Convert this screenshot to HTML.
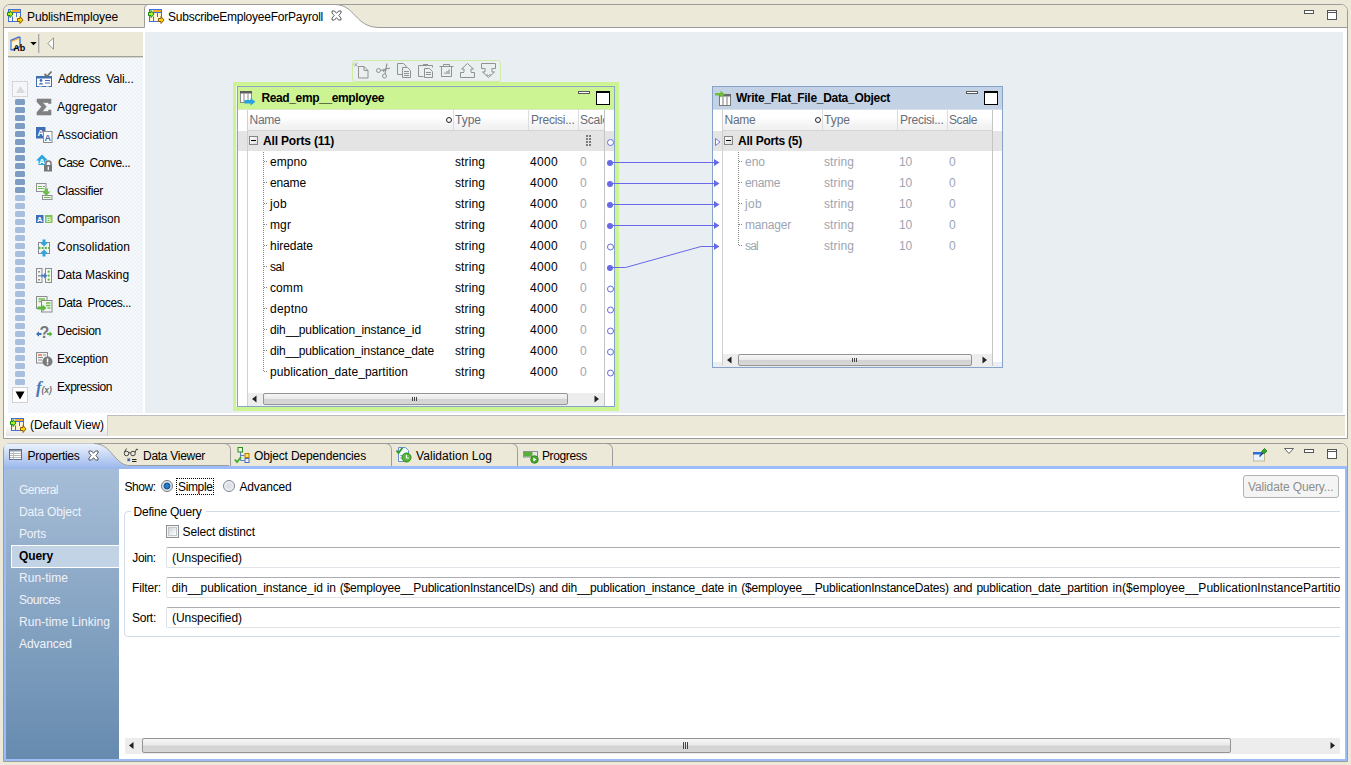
<!DOCTYPE html>
<html><head><meta charset="utf-8"><title>Developer</title>
<style>
html,body{margin:0;padding:0}
body{width:1351px;height:765px;overflow:hidden;background:#ECE9D8;position:relative;font-family:"Liberation Sans", sans-serif;font-size:12px;color:#000}
.r{position:absolute;box-sizing:border-box}
.t{position:absolute;white-space:pre;line-height:16px;height:16px}
svg{position:absolute;overflow:visible}
</style></head><body>
<div class="r" style="left:3px;top:4px;width:1345px;height:435px;border:1px solid #9C9C9C;border-radius:7px 7px 0 0;background:#fff"></div>
<div class="r" style="left:4px;top:5px;width:1343px;height:23px;background:#ECE9D8;border-bottom:1px solid #9C9C9C;border-radius:6px 6px 0 0"></div>
<svg style="left:0;top:0" width="1351" height="40" viewBox="0 0 1351 40">
<path d="M144.500 28.500 V9 Q144.500 4.500 149 4.500 H334.500 C346.500 4.500 351.500 12 357.500 18 C363.500 24 369.500 27.500 380 27.500 V28.500 Z" fill="#fff"/>
<path d="M144.500 27.500 V9 Q144.500 4.500 149 4.500 H334.500 C346.500 4.500 351.500 12 357.500 18 C363.500 24 369.500 27.500 380 27.500" fill="none" stroke="#9C9C9C"/>
</svg>
<svg style="left:7px;top:9px" width="17" height="16" viewBox="0 0 17 16">
<rect x="1.5" y=".5" width="12" height="12" fill="#FFF3D6" stroke="#3F70D6"/>
<rect x="5" y="1" width="8" height="2" fill="#F7A824"/>
<path d="M5 3.500h9M9.500 4v4M5.500 7.500v5" stroke="#3F70D6" fill="none"/>
<path d="M.500 3.500h2.500V1.500l3 3.500-3 3.500V6.500H.500z" fill="#B4EC20" stroke="#0E8A10" stroke-width="1"/>
<path d="M10.500 9.500h2.500V7.500l3 3.500-3 3.500V12.500h-2.500z" fill="#FFD400" stroke="#8C5C00" stroke-width="1"/>
</svg>
<span class="t" style="left:27px;top:8.5px;letter-spacing:-0.115px;">PublishEmployee</span>
<svg style="left:148px;top:9px" width="17" height="16" viewBox="0 0 17 16">
<rect x="1.5" y=".5" width="12" height="12" fill="#FFF3D6" stroke="#3F70D6"/>
<rect x="5" y="1" width="8" height="2" fill="#F7A824"/>
<path d="M5 3.500h9M9.500 4v4M5.500 7.500v5" stroke="#3F70D6" fill="none"/>
<path d="M.500 3.500h2.500V1.500l3 3.500-3 3.500V6.500H.500z" fill="#B4EC20" stroke="#0E8A10" stroke-width="1"/>
<path d="M10.500 9.500h2.500V7.500l3 3.500-3 3.500V12.500h-2.500z" fill="#FFD400" stroke="#8C5C00" stroke-width="1"/>
</svg>
<span class="t" style="left:168px;top:8.5px;letter-spacing:-0.237px;">SubscribeEmployeeForPayroll</span>
<svg style="left:331px;top:10px" width="11" height="11" viewBox="0 0 11 11"><path d="M1 1h2.500l2 2.300 2-2.300H10v2L7.800 5.500 10 8v2H7.500l-2-2.300-2 2.300H1V8l2.200-2.500L1 3z" fill="#fff" stroke="#4A4A4A" stroke-width=".9"/></svg>
<div class="r" style="left:1304px;top:10px;width:10px;height:4px;border:1px solid #555;background:#fff"></div>
<div class="r" style="left:1327px;top:10px;width:10px;height:10px;border:1px solid #555;background:linear-gradient(#fff 0 1px,#555 1px 2px,#fff 2px)"></div>
<div class="r" style="left:8px;top:32px;width:135px;height:25px;background:#ECE9D8;border-bottom:1px solid #A2A19A"></div>
<div class="r" style="left:8px;top:57px;width:135px;height:356px;background:repeating-conic-gradient(#EEF3F8 0 25%,#F6F8FB 0 50%) 0 0/4px 4px"></div>
<div class="r" style="left:8px;top:57px;width:135px;height:1px;background:#D4D6D2"></div>
<div class="r" style="left:38px;top:34px;width:1px;height:19px;background:#A8A8A8"></div>
<div class="r" style="left:39px;top:34px;width:1px;height:19px;background:#D4D2C6"></div>
<svg style="left:47px;top:37px" width="8" height="13" viewBox="0 0 8 13"><path d="M6.500.800v11.400L.800 6.500z" fill="#fff" stroke="#8A8A8A" stroke-width=".9"/></svg>
<svg style="left:30px;top:42px" width="8" height="5" viewBox="0 0 8 5"><path d="M.300 0h6.400L3.500 3.300z" fill="#000"/></svg>
<svg style="left:10px;top:36px" width="18" height="18" viewBox="0 0 18 18"><path d="M.800 4.500l8-3.500 1.200.5v9l-8 3.500-1.200-.5z" fill="#FFF4D8" stroke="#3F72DC" stroke-width="1.400"/>
<path d="M1.500 5.500l7.500-3.200" stroke="#F2A32C" stroke-width="1.500" stroke-dasharray="1.500 .6"/>
<path d="M.800 4.500v9" stroke="#7FA2E8" stroke-width="1.600"/></svg>
<span class="t" style="left:13.3px;top:39.6px;letter-spacing:0.000px;font-weight:bold;font-size:9px;">Ab</span>
<div class="r" style="left:12px;top:81px;width:16px;height:16px;border:1px solid #D6D6D6;background:#F4F6F9"></div>
<svg style="left:15.5px;top:86px" width="9" height="7" viewBox="0 0 9 7"><path d="M4.500 0L9 7H0z" fill="#DADADA"/></svg>
<div class="r" style="left:15px;top:99px;width:10px;height:6px;background:#7E9DC2;border-radius:1.500px"></div>
<div class="r" style="left:15px;top:107px;width:10px;height:6px;background:#7E9DC2;border-radius:1.500px"></div>
<div class="r" style="left:15px;top:115px;width:10px;height:6px;background:#7E9DC2;border-radius:1.500px"></div>
<div class="r" style="left:15px;top:123px;width:10px;height:6px;background:#7E9DC2;border-radius:1.500px"></div>
<div class="r" style="left:15px;top:131px;width:10px;height:6px;background:#7E9DC2;border-radius:1.500px"></div>
<div class="r" style="left:15px;top:139px;width:10px;height:6px;background:#7E9DC2;border-radius:1.500px"></div>
<div class="r" style="left:15px;top:147px;width:10px;height:6px;background:#7E9DC2;border-radius:1.500px"></div>
<div class="r" style="left:15px;top:155px;width:10px;height:6px;background:#7E9DC2;border-radius:1.500px"></div>
<div class="r" style="left:15px;top:163px;width:10px;height:6px;background:#7E9DC2;border-radius:1.500px"></div>
<div class="r" style="left:15px;top:171px;width:10px;height:6px;background:#7E9DC2;border-radius:1.500px"></div>
<div class="r" style="left:15px;top:179px;width:10px;height:6px;background:#7E9DC2;border-radius:1.500px"></div>
<div class="r" style="left:15px;top:187px;width:10px;height:6px;background:#7E9DC2;border-radius:1.500px"></div>
<div class="r" style="left:15px;top:195px;width:10px;height:6px;background:#A8BFE0;border-radius:1.500px"></div>
<div class="r" style="left:15px;top:203px;width:10px;height:6px;background:#A8BFE0;border-radius:1.500px"></div>
<div class="r" style="left:15px;top:211px;width:10px;height:6px;background:#A8BFE0;border-radius:1.500px"></div>
<div class="r" style="left:15px;top:219px;width:10px;height:6px;background:#A8BFE0;border-radius:1.500px"></div>
<div class="r" style="left:15px;top:227px;width:10px;height:6px;background:#A8BFE0;border-radius:1.500px"></div>
<div class="r" style="left:15px;top:235px;width:10px;height:6px;background:#A8BFE0;border-radius:1.500px"></div>
<div class="r" style="left:15px;top:243px;width:10px;height:6px;background:#A8BFE0;border-radius:1.500px"></div>
<div class="r" style="left:15px;top:251px;width:10px;height:6px;background:#A8BFE0;border-radius:1.500px"></div>
<div class="r" style="left:15px;top:259px;width:10px;height:6px;background:#A8BFE0;border-radius:1.500px"></div>
<div class="r" style="left:15px;top:267px;width:10px;height:6px;background:#A8BFE0;border-radius:1.500px"></div>
<div class="r" style="left:15px;top:275px;width:10px;height:6px;background:#A8BFE0;border-radius:1.500px"></div>
<div class="r" style="left:15px;top:283px;width:10px;height:6px;background:#A8BFE0;border-radius:1.500px"></div>
<div class="r" style="left:15px;top:291px;width:10px;height:6px;background:#A8BFE0;border-radius:1.500px"></div>
<div class="r" style="left:15px;top:299px;width:10px;height:6px;background:#A8BFE0;border-radius:1.500px"></div>
<div class="r" style="left:15px;top:307px;width:10px;height:6px;background:#A8BFE0;border-radius:1.500px"></div>
<div class="r" style="left:15px;top:315px;width:10px;height:6px;background:#A8BFE0;border-radius:1.500px"></div>
<div class="r" style="left:15px;top:323px;width:10px;height:6px;background:#A8BFE0;border-radius:1.500px"></div>
<div class="r" style="left:15px;top:331px;width:10px;height:6px;background:#A8BFE0;border-radius:1.500px"></div>
<div class="r" style="left:15px;top:339px;width:10px;height:6px;background:#A8BFE0;border-radius:1.500px"></div>
<div class="r" style="left:15px;top:347px;width:10px;height:6px;background:#A8BFE0;border-radius:1.500px"></div>
<div class="r" style="left:15px;top:355px;width:10px;height:6px;background:#A8BFE0;border-radius:1.500px"></div>
<div class="r" style="left:15px;top:363px;width:10px;height:6px;background:#A8BFE0;border-radius:1.500px"></div>
<div class="r" style="left:15px;top:371px;width:10px;height:6px;background:#A8BFE0;border-radius:1.500px"></div>
<div class="r" style="left:15px;top:379px;width:10px;height:6px;background:#A8BFE0;border-radius:1.500px"></div>
<div class="r" style="left:12px;top:387px;width:16px;height:16px;border:1px solid #D0D0D0;background:#fff"></div>
<svg style="left:15px;top:391px" width="10" height="9" viewBox="0 0 10 9"><path d="M.500.500h9L5 8.500z" fill="#000"/></svg>
<span class="t" style="left:58px;top:71px;letter-spacing:-0.270px;">Address  Vali...</span>
<svg style="left:36px;top:71px" width="17" height="18" viewBox="0 0 17 18"><rect x=".5" y="5.500" width="15" height="10" fill="#fff" stroke="#3F6EB4"/>
<rect x="1" y="6" width="14" height="1.500" fill="#3F6EB4"/>
<circle cx="5" cy="9.500" r="1.400" fill="#3F6EB4"/><path d="M2.500 13.500q2.500-3.500 5 0z" fill="#3F6EB4"/>
<path d="M9 9.500h5M9 12h5" stroke="#3F6EB4"/>
<path d="M3 15.500l1.500-2 1.500 2M10 15.500l1.500-2 1.500 2" fill="#fff" stroke="none"/>
<path d="M8.500 3l2.500 2.500L15.500.500" stroke="#707070" stroke-width="1.800" fill="none"/></svg>
<span class="t" style="left:57px;top:99px;letter-spacing:0.062px;">Aggregator</span>
<svg style="left:36px;top:99px" width="17" height="18" viewBox="0 0 17 18"><path d="M1 0h14v4.500h-2.500V3.500H6.500l3.800 4.300-4 4.700h6.200V11h2.500v5H1v-2.800l4.600-5.400L1 3z" fill="#808080" stroke="#808080" stroke-width=".6"/></svg>
<span class="t" style="left:57px;top:127px;letter-spacing:-0.034px;">Association</span>
<svg style="left:36px;top:127px" width="17" height="18" viewBox="0 0 17 18"><rect x="0" y="0" width="9.500" height="11.500" fill="#3F6EB4"/>
<text x="4.700" y="8.500" font-size="9" font-weight="bold" fill="#fff" text-anchor="middle" font-family="Liberation Sans">A</text>
<rect x="7.500" y="4.500" width="8.500" height="11" fill="#fff" stroke="#8A8A8A"/>
<text x="11.800" y="14" font-size="9" font-weight="bold" fill="#3F6EB4" text-anchor="middle" font-family="Liberation Sans">A</text></svg>
<span class="t" style="left:58px;top:155px;letter-spacing:-0.527px;">Case  Conve...</span>
<svg style="left:36px;top:155px" width="17" height="18" viewBox="0 0 17 18"><path d="M6 -.500L12 5.500H9.500V10H2.500V5.500H0z" fill="#2FA5E0"/>
<text x="6" y="8.500" font-size="8" font-weight="bold" fill="#fff" text-anchor="middle" font-family="Liberation Sans">A</text>
<path d="M10 10V8.500a2.500 2.500 0 0 1 5 0V10" fill="none" stroke="#777" stroke-width="1.500"/>
<rect x="8" y="10" width="8" height="6.500" fill="#777"/><rect x="11.700" y="11.500" width="1.200" height="3.500" fill="#fff"/></svg>
<span class="t" style="left:57px;top:183px;letter-spacing:-0.334px;">Classifier</span>
<svg style="left:36px;top:183px" width="17" height="18" viewBox="0 0 17 18"><rect x=".5" y=".500" width="9.500" height="8" fill="#F4F4F4" stroke="#909090"/>
<path d="M2 3.500h4M2 5.500h6" stroke="#6CC04A" stroke-width="1"/><path d="M7 3.500h2" stroke="#909090"/>
<path d="M8.500 5.500h3.500v3h2.500L10.300 13 6 8.500h2.500z" fill="#6CC04A"/>
<rect x="6.500" y="12.500" width="9.500" height="4" fill="#F4F4F4" stroke="#909090"/><path d="M8 14.500h6.500" stroke="#6CC04A"/></svg>
<span class="t" style="left:57px;top:211px;letter-spacing:-0.170px;">Comparison</span>
<svg style="left:36px;top:211px" width="17" height="18" viewBox="0 0 17 18"><rect x="0" y="4" width="7.500" height="8" fill="#3F6EB4"/><rect x="9" y="4" width="7.500" height="8" fill="#7DC35A"/>
<text x="3.800" y="11" font-size="7.500" font-weight="bold" fill="#fff" text-anchor="middle" font-family="Liberation Sans">A</text>
<text x="12.800" y="11" font-size="7.500" font-weight="bold" fill="#DFF2D4" text-anchor="middle" font-family="Liberation Sans">B</text></svg>
<span class="t" style="left:57px;top:239px;letter-spacing:0.022px;">Consolidation</span>
<svg style="left:36px;top:239px" width="17" height="18" viewBox="0 0 17 18"><rect x="2.500" y="3.500" width="11" height="11" fill="#F2F2F2" stroke="#8C8C8C"/>
<path d="M2.500 9h11" stroke="#5CB83C" stroke-width="1.800" stroke-dasharray="2 1.200"/>
<path d="M6.500 .500h3v3h2.500L8 7.500 4 3.500h2.500z" fill="#2FA5E0"/>
<path d="M6.500 17.500h3v-3h2.500L8 10.500 4 14.500h2.500z" fill="#2FA5E0"/></svg>
<span class="t" style="left:57px;top:267px;letter-spacing:-0.115px;">Data Masking</span>
<svg style="left:36px;top:267px" width="17" height="18" viewBox="0 0 17 18"><rect x=".5" y="1.500" width="5.500" height="14" fill="#F4F4F4" stroke="#8C8C8C"/>
<rect x="9.500" y="1.500" width="6" height="14" fill="#F4F4F4" stroke="#8C8C8C"/>
<path d="M3 4v1.500M3 8v1.500M3 12v1.500" stroke="#333"/>
<circle cx="12.700" cy="4.700" r="1.100" fill="#5CB83C"/><circle cx="12.700" cy="8.700" r="1.100" fill="#5CB83C"/><circle cx="12.700" cy="12.700" r="1.100" fill="#5CB83C"/>
<path d="M4.500 7.700h3.500V6l3.500 2.700L8 11.500V9.700H4.500z" fill="#4A7EC0"/></svg>
<span class="t" style="left:58px;top:295px;letter-spacing:-0.425px;">Data  Proces...</span>
<svg style="left:36px;top:295px" width="17" height="18" viewBox="0 0 17 18"><rect x=".5" y="1.500" width="10.500" height="12" fill="#F4F4F4" stroke="#8C8C8C"/>
<path d="M2.500 4h6.500M2.500 6.500h3" stroke="#6CC04A" stroke-width="1.300"/>
<rect x="5.500" y="5.500" width="10.500" height="11.500" fill="#F4F4F4" stroke="#8C8C8C"/>
<path d="M10 8h4.500M10 10.500h4.500M11.500 13h3" stroke="#6CC04A" stroke-width="1.300"/>
<path d="M1.500 11.500h5V9.500l4 3.500-4 3.500v-2h-5z" fill="#5CB83C"/></svg>
<span class="t" style="left:57px;top:323px;letter-spacing:-0.254px;">Decision</span>
<svg style="left:36px;top:323px" width="17" height="18" viewBox="0 0 17 18"><text x="8.500" y="14.500" font-size="16" font-weight="bold" fill="#777" text-anchor="middle" font-family="Liberation Sans">?</text>
<path d="M0 11l3-2.800v1.800h2.500v2H3v1.800z" fill="#3F6EB4"/>
<path d="M16.500 11l-3-2.800v1.800H11v2h2.500v1.800z" fill="#5CB83C"/></svg>
<span class="t" style="left:57px;top:351px;letter-spacing:-0.189px;">Exception</span>
<svg style="left:36px;top:351px" width="17" height="18" viewBox="0 0 17 18"><rect x=".5" y="1.500" width="11" height="10.500" fill="#F4F4F4" stroke="#8C8C8C"/>
<path d="M2 4h4" stroke="#E8744C" stroke-width="1.500"/><path d="M7 4h3M2 6.500h5M2 9h4" stroke="#8C8C8C"/>
<circle cx="11.500" cy="10.500" r="5" fill="#7A7A7A"/><rect x="10.800" y="7.500" width="1.500" height="4" fill="#fff"/><rect x="10.800" y="12.300" width="1.500" height="1.400" fill="#fff"/></svg>
<span class="t" style="left:57px;top:379px;letter-spacing:-0.438px;">Expression</span>
<svg style="left:36px;top:379px" width="17" height="18" viewBox="0 0 17 18"><text x="0" y="13.500" font-size="17" font-style="italic" font-weight="bold" fill="#4A78B8" font-family="Liberation Serif">f</text>
<text x="5.500" y="14" font-size="8.500" font-style="italic" font-weight="bold" fill="#707070" font-family="Liberation Sans">(x)</text></svg>
<div class="r" style="left:145px;top:32px;width:1198px;height:381px;background:#E9EEF3"></div>
<div class="r" style="left:107px;top:415px;width:1238px;height:21px;background:#ECE9D8;border-left:1px solid #D0CEC0;border-top:1px solid #BDBDBD"></div>
<div class="r" style="left:6px;top:415px;width:101px;height:21px;background:linear-gradient(#fff 50%,#E3E3E3)"></div>
<svg style="left:10px;top:418px" width="17" height="16" viewBox="0 0 17 16">
<rect x="1.5" y=".5" width="12" height="12" fill="#FFF3D6" stroke="#3F70D6"/>
<rect x="5" y="1" width="8" height="2" fill="#F7A824"/>
<path d="M5 3.500h9M9.500 4v4M5.500 7.500v5" stroke="#3F70D6" fill="none"/>
<path d="M.500 3.500h2.500V1.500l3 3.500-3 3.500V6.500H.500z" fill="#B4EC20" stroke="#0E8A10" stroke-width="1"/>
<path d="M10.500 9.500h2.500V7.500l3 3.500-3 3.500V12.500h-2.500z" fill="#FFD400" stroke="#8C5C00" stroke-width="1"/>
</svg>
<span class="t" style="left:30px;top:417px;letter-spacing:-0.081px;">(Default View)</span>
<div class="r" style="left:233px;top:82px;width:386px;height:329px;background:#CDF492"></div>
<div class="r" style="left:236px;top:85px;width:379px;height:1px;background:#D6FA8E"></div>
<div class="r" style="left:236px;top:86px;width:1px;height:321px;background:#F0F2F8"></div>
<div class="r" style="left:237px;top:86px;width:378px;height:321px;border:1px solid #86A4C8;background:#fff"></div>
<div class="r" style="left:238px;top:87px;width:376px;height:22px;background:#CDF492"></div>
<div class="r" style="left:238px;top:109px;width:376px;height:1px;background:#DDE8C8"></div>
<svg style="left:240px;top:91px" width="16" height="15" viewBox="0 0 16 15"><rect x=".5" y=".5" width="11" height="11" fill="#fff" stroke="#8A8A8A"/>
<rect x="0" y="0" width="12" height="2.500" fill="#5E5E5E"/>
<path d="M4 2.500v9M8 2.500v9" stroke="#8A8A8A"/>
<path d="M4.500 9h6V7l5 3.700-5 3.700v-2h-6z" fill="#29A3E0"/></svg>
<span class="t" style="left:261.5px;top:90px;letter-spacing:-0.384px;font-weight:bold;">Read_emp__employee</span>
<div class="r" style="left:578px;top:91px;width:12px;height:3px;border:1px solid #5A5A5A;background:#fff"></div>
<div class="r" style="left:596px;top:91px;width:14px;height:14px;border:1px solid #000;border-top-width:2px;background:#fff"></div>
<div class="r" style="left:248px;top:110px;width:356px;height:21px;background:linear-gradient(#fff,#fff 35%,#F4F4F5 75%,#EFF0F1);border-bottom:1px solid #D5D5D5"></div>
<span class="t" style="left:249.5px;top:112px;letter-spacing:-0.254px;color:#666E7A;">Name</span>
<span class="t" style="left:455px;top:112px;letter-spacing:-0.004px;color:#666E7A;">Type</span>
<span class="t" style="left:531px;top:112px;letter-spacing:-0.252px;color:#666E7A;">Precisi...</span>
<div class="r" style="left:580px;top:112px;width:24px;height:16px;overflow:hidden"><span class="t" style="left:0px;top:0px;letter-spacing:-0.206px;color:#666E7A;">Scale</span></div>
<div class="r" style="left:453px;top:110px;width:1px;height:20px;background:#DADCE0"></div>
<div class="r" style="left:528px;top:110px;width:1px;height:20px;background:#DADCE0"></div>
<div class="r" style="left:578px;top:110px;width:1px;height:20px;background:#DADCE0"></div>
<div class="r" style="left:446px;top:117px;width:6px;height:6px;border:1.500px solid #222;border-radius:50%"></div>
<div class="r" style="left:238px;top:131px;width:376px;height:20px;background:#E4E4E4"></div>
<div class="r" style="left:604px;top:110px;width:1px;height:296px;background:#C4C4C4"></div>
<div class="r" style="left:247px;top:110px;width:1px;height:296px;background:#D0D0D0"></div>
<div class="r" style="left:249px;top:136px;width:9px;height:9px;border:1px solid #848484;background:linear-gradient(135deg,#fff,#DCDCDC)"></div>
<div class="r" style="left:251px;top:140px;width:5px;height:1px;background:#000"></div>
<span class="t" style="left:263px;top:133px;letter-spacing:-0.169px;font-weight:bold;">All Ports (11)</span>
<div class="r" style="left:586px;top:135px;width:2px;height:2px;background:#7A7A7A"></div>
<div class="r" style="left:589px;top:135px;width:2px;height:2px;background:#7A7A7A"></div>
<div class="r" style="left:586px;top:138px;width:2px;height:2px;background:#7A7A7A"></div>
<div class="r" style="left:589px;top:138px;width:2px;height:2px;background:#7A7A7A"></div>
<div class="r" style="left:586px;top:141px;width:2px;height:2px;background:#7A7A7A"></div>
<div class="r" style="left:589px;top:141px;width:2px;height:2px;background:#7A7A7A"></div>
<div class="r" style="left:586px;top:144px;width:2px;height:2px;background:#7A7A7A"></div>
<div class="r" style="left:589px;top:144px;width:2px;height:2px;background:#7A7A7A"></div>
<span class="t" style="left:270px;top:154px;letter-spacing:0.059px;">empno</span>
<span class="t" style="left:455px;top:154px;letter-spacing:0.109px;">string</span>
<span class="t" style="left:530px;top:154px;letter-spacing:0.324px;">4000</span>
<span class="t" style="left:580px;top:154px;letter-spacing:0.312px;color:#9CA4B2;">0</span>
<div class="r" style="left:264px;top:161px;width:4px;height:1px;background:repeating-linear-gradient(90deg,#888 0 1px,transparent 1px 2px)"></div>
<span class="t" style="left:270px;top:175px;letter-spacing:-0.141px;">ename</span>
<span class="t" style="left:455px;top:175px;letter-spacing:0.109px;">string</span>
<span class="t" style="left:530px;top:175px;letter-spacing:0.324px;">4000</span>
<span class="t" style="left:580px;top:175px;letter-spacing:0.312px;color:#9CA4B2;">0</span>
<div class="r" style="left:264px;top:182px;width:4px;height:1px;background:repeating-linear-gradient(90deg,#888 0 1px,transparent 1px 2px)"></div>
<span class="t" style="left:270px;top:196px;letter-spacing:0.328px;">job</span>
<span class="t" style="left:455px;top:196px;letter-spacing:0.109px;">string</span>
<span class="t" style="left:530px;top:196px;letter-spacing:0.324px;">4000</span>
<span class="t" style="left:580px;top:196px;letter-spacing:0.312px;color:#9CA4B2;">0</span>
<div class="r" style="left:264px;top:203px;width:4px;height:1px;background:repeating-linear-gradient(90deg,#888 0 1px,transparent 1px 2px)"></div>
<span class="t" style="left:270px;top:217px;letter-spacing:0.109px;">mgr</span>
<span class="t" style="left:455px;top:217px;letter-spacing:0.109px;">string</span>
<span class="t" style="left:530px;top:217px;letter-spacing:0.324px;">4000</span>
<span class="t" style="left:580px;top:217px;letter-spacing:0.312px;color:#9CA4B2;">0</span>
<div class="r" style="left:264px;top:224px;width:4px;height:1px;background:repeating-linear-gradient(90deg,#888 0 1px,transparent 1px 2px)"></div>
<span class="t" style="left:270px;top:238px;letter-spacing:-0.047px;">hiredate</span>
<span class="t" style="left:455px;top:238px;letter-spacing:0.109px;">string</span>
<span class="t" style="left:530px;top:238px;letter-spacing:0.324px;">4000</span>
<span class="t" style="left:580px;top:238px;letter-spacing:0.312px;color:#9CA4B2;">0</span>
<div class="r" style="left:264px;top:245px;width:4px;height:1px;background:repeating-linear-gradient(90deg,#888 0 1px,transparent 1px 2px)"></div>
<span class="t" style="left:270px;top:259px;letter-spacing:-0.448px;">sal</span>
<span class="t" style="left:455px;top:259px;letter-spacing:0.109px;">string</span>
<span class="t" style="left:530px;top:259px;letter-spacing:0.324px;">4000</span>
<span class="t" style="left:580px;top:259px;letter-spacing:0.312px;color:#9CA4B2;">0</span>
<div class="r" style="left:264px;top:266px;width:4px;height:1px;background:repeating-linear-gradient(90deg,#888 0 1px,transparent 1px 2px)"></div>
<span class="t" style="left:270px;top:280px;letter-spacing:0.082px;">comm</span>
<span class="t" style="left:455px;top:280px;letter-spacing:0.109px;">string</span>
<span class="t" style="left:530px;top:280px;letter-spacing:0.324px;">4000</span>
<span class="t" style="left:580px;top:280px;letter-spacing:0.312px;color:#9CA4B2;">0</span>
<div class="r" style="left:264px;top:287px;width:4px;height:1px;background:repeating-linear-gradient(90deg,#888 0 1px,transparent 1px 2px)"></div>
<span class="t" style="left:270px;top:301px;letter-spacing:0.216px;">deptno</span>
<span class="t" style="left:455px;top:301px;letter-spacing:0.109px;">string</span>
<span class="t" style="left:530px;top:301px;letter-spacing:0.324px;">4000</span>
<span class="t" style="left:580px;top:301px;letter-spacing:0.312px;color:#9CA4B2;">0</span>
<div class="r" style="left:264px;top:308px;width:4px;height:1px;background:repeating-linear-gradient(90deg,#888 0 1px,transparent 1px 2px)"></div>
<span class="t" style="left:270px;top:322px;letter-spacing:-0.112px;">dih__publication_instance_id</span>
<span class="t" style="left:455px;top:322px;letter-spacing:0.109px;">string</span>
<span class="t" style="left:530px;top:322px;letter-spacing:0.324px;">4000</span>
<span class="t" style="left:580px;top:322px;letter-spacing:0.312px;color:#9CA4B2;">0</span>
<div class="r" style="left:264px;top:329px;width:4px;height:1px;background:repeating-linear-gradient(90deg,#888 0 1px,transparent 1px 2px)"></div>
<span class="t" style="left:270px;top:343px;letter-spacing:-0.138px;">dih__publication_instance_date</span>
<span class="t" style="left:455px;top:343px;letter-spacing:0.109px;">string</span>
<span class="t" style="left:530px;top:343px;letter-spacing:0.324px;">4000</span>
<span class="t" style="left:580px;top:343px;letter-spacing:0.312px;color:#9CA4B2;">0</span>
<div class="r" style="left:264px;top:350px;width:4px;height:1px;background:repeating-linear-gradient(90deg,#888 0 1px,transparent 1px 2px)"></div>
<span class="t" style="left:270px;top:364px;letter-spacing:0.047px;">publication_date_partition</span>
<span class="t" style="left:455px;top:364px;letter-spacing:0.109px;">string</span>
<span class="t" style="left:530px;top:364px;letter-spacing:0.324px;">4000</span>
<span class="t" style="left:580px;top:364px;letter-spacing:0.312px;color:#9CA4B2;">0</span>
<div class="r" style="left:264px;top:371px;width:4px;height:1px;background:repeating-linear-gradient(90deg,#888 0 1px,transparent 1px 2px)"></div>
<div class="r" style="left:263px;top:152px;width:1px;height:220px;background:repeating-linear-gradient(#888 0 1px,transparent 1px 2px)"></div>
<div class="r" style="left:248px;top:393px;width:356px;height:13px;background:#EDEDED"></div>
<div class="r" style="left:263px;top:393px;width:305px;height:12px;border:1px solid #949494;border-radius:2px;background:linear-gradient(#F6F6F6,#EAEAEA 48%,#D2D2D2 52%,#D8D8D8)"></div>
<div class="r" style="left:412px;top:397px;width:1px;height:4px;background:#444"></div>
<div class="r" style="left:414px;top:397px;width:1px;height:4px;background:#444"></div>
<div class="r" style="left:416px;top:397px;width:1px;height:4px;background:#444"></div>
<svg style="left:0;top:0" width="1351" height="765"><path d="M256.5 395.5v7l-4.500-3.500z M594.5 395.5v7l4.500-3.500z" fill="#222"/></svg>
<div class="r" style="left:712px;top:86px;width:291px;height:282px;border:1px solid #86A3C8;background:#fff"></div>
<div class="r" style="left:713px;top:87px;width:289px;height:22px;background:#C3D3E5"></div>
<div class="r" style="left:713px;top:109px;width:289px;height:1px;background:#D8E0EA"></div>
<svg style="left:715px;top:90px" width="16" height="16" viewBox="0 0 16 16"><rect x="4.500" y="4.500" width="11" height="11" fill="#fff" stroke="#7A7A7A"/>
<rect x="4" y="4" width="12" height="2.500" fill="#6A6A6A"/>
<path d="M8 6.500v9M12 6.500v9" stroke="#7A7A7A"/>
<path d="M0 3h5.500V.800L10 4.200 5.500 7.600V5.400H0z" fill="#6CC038"/></svg>
<span class="t" style="left:736px;top:90px;letter-spacing:-0.291px;font-weight:bold;">Write_Flat_File_Data_Object</span>
<div class="r" style="left:966px;top:91px;width:12px;height:3px;border:1px solid #5A5A5A;background:#fff"></div>
<div class="r" style="left:984px;top:91px;width:14px;height:14px;border:1px solid #000;border-top-width:2px;background:#fff"></div>
<div class="r" style="left:723px;top:110px;width:269px;height:21px;background:linear-gradient(#fff,#fff 35%,#F4F4F5 75%,#EFF0F1);border-bottom:1px solid #D5D5D5"></div>
<span class="t" style="left:724.5px;top:112px;letter-spacing:-0.254px;color:#666E7A;">Name</span>
<span class="t" style="left:824px;top:112px;letter-spacing:-0.004px;color:#666E7A;">Type</span>
<span class="t" style="left:900px;top:112px;letter-spacing:-0.252px;color:#666E7A;">Precisi...</span>
<span class="t" style="left:949px;top:112px;letter-spacing:-0.406px;color:#666E7A;">Scale</span>
<div class="r" style="left:822px;top:110px;width:1px;height:20px;background:#DADCE0"></div>
<div class="r" style="left:897px;top:110px;width:1px;height:20px;background:#DADCE0"></div>
<div class="r" style="left:947px;top:110px;width:1px;height:20px;background:#DADCE0"></div>
<div class="r" style="left:815px;top:117px;width:6px;height:6px;border:1.500px solid #222;border-radius:50%"></div>
<div class="r" style="left:713px;top:131px;width:289px;height:20px;background:#E4E4E4"></div>
<div class="r" style="left:992px;top:110px;width:1px;height:256px;background:#C4C4C4"></div>
<div class="r" style="left:722px;top:110px;width:1px;height:256px;background:#D0D0D0"></div>
<div class="r" style="left:724px;top:136px;width:9px;height:9px;border:1px solid #848484;background:linear-gradient(135deg,#fff,#DCDCDC)"></div>
<div class="r" style="left:726px;top:140px;width:5px;height:1px;background:#000"></div>
<span class="t" style="left:738px;top:133px;letter-spacing:-0.257px;font-weight:bold;">All Ports (5)</span>
<span class="t" style="left:745px;top:154px;letter-spacing:-0.010px;color:#9CA4B2;">eno</span>
<span class="t" style="left:824px;top:154px;letter-spacing:0.109px;color:#9CA4B2;">string</span>
<span class="t" style="left:899px;top:154px;letter-spacing:-0.180px;color:#9CA4B2;">10</span>
<span class="t" style="left:949px;top:154px;letter-spacing:0.312px;color:#9CA4B2;">0</span>
<div class="r" style="left:739px;top:161px;width:4px;height:1px;background:repeating-linear-gradient(90deg,#888 0 1px,transparent 1px 2px)"></div>
<span class="t" style="left:745px;top:175px;letter-spacing:-0.341px;color:#9CA4B2;">ename</span>
<span class="t" style="left:824px;top:175px;letter-spacing:0.109px;color:#9CA4B2;">string</span>
<span class="t" style="left:899px;top:175px;letter-spacing:-0.180px;color:#9CA4B2;">10</span>
<span class="t" style="left:949px;top:175px;letter-spacing:0.312px;color:#9CA4B2;">0</span>
<div class="r" style="left:739px;top:182px;width:4px;height:1px;background:repeating-linear-gradient(90deg,#888 0 1px,transparent 1px 2px)"></div>
<span class="t" style="left:745px;top:196px;letter-spacing:0.328px;color:#9CA4B2;">job</span>
<span class="t" style="left:824px;top:196px;letter-spacing:0.109px;color:#9CA4B2;">string</span>
<span class="t" style="left:899px;top:196px;letter-spacing:-0.180px;color:#9CA4B2;">10</span>
<span class="t" style="left:949px;top:196px;letter-spacing:0.312px;color:#9CA4B2;">0</span>
<div class="r" style="left:739px;top:203px;width:4px;height:1px;background:repeating-linear-gradient(90deg,#888 0 1px,transparent 1px 2px)"></div>
<span class="t" style="left:745px;top:217px;letter-spacing:-0.196px;color:#9CA4B2;">manager</span>
<span class="t" style="left:824px;top:217px;letter-spacing:0.109px;color:#9CA4B2;">string</span>
<span class="t" style="left:899px;top:217px;letter-spacing:-0.180px;color:#9CA4B2;">10</span>
<span class="t" style="left:949px;top:217px;letter-spacing:0.312px;color:#9CA4B2;">0</span>
<div class="r" style="left:739px;top:224px;width:4px;height:1px;background:repeating-linear-gradient(90deg,#888 0 1px,transparent 1px 2px)"></div>
<span class="t" style="left:745px;top:238px;letter-spacing:-0.781px;color:#9CA4B2;">sal</span>
<span class="t" style="left:824px;top:238px;letter-spacing:0.109px;color:#9CA4B2;">string</span>
<span class="t" style="left:899px;top:238px;letter-spacing:-0.180px;color:#9CA4B2;">10</span>
<span class="t" style="left:949px;top:238px;letter-spacing:0.312px;color:#9CA4B2;">0</span>
<div class="r" style="left:739px;top:245px;width:4px;height:1px;background:repeating-linear-gradient(90deg,#888 0 1px,transparent 1px 2px)"></div>
<div class="r" style="left:738px;top:152px;width:1px;height:94px;background:repeating-linear-gradient(#888 0 1px,transparent 1px 2px)"></div>
<div class="r" style="left:723px;top:354px;width:269px;height:13px;background:#EDEDED"></div>
<div class="r" style="left:738px;top:354px;width:234px;height:12px;border:1px solid #949494;border-radius:2px;background:linear-gradient(#F6F6F6,#EAEAEA 48%,#D2D2D2 52%,#D8D8D8)"></div>
<div class="r" style="left:852px;top:358px;width:1px;height:4px;background:#444"></div>
<div class="r" style="left:854px;top:358px;width:1px;height:4px;background:#444"></div>
<div class="r" style="left:856px;top:358px;width:1px;height:4px;background:#444"></div>
<svg style="left:0;top:0" width="1351" height="765"><path d="M731.5 356.5v7l-4.500-3.500z M982.5 356.5v7l4.500-3.500z" fill="#222"/></svg>
<div class="r" style="left:713px;top:362px;width:9px;height:5px;background:#EAEFF5"></div>
<div class="r" style="left:993px;top:362px;width:9px;height:5px;background:#EAEFF5"></div>
<svg style="left:0;top:0" width="1351" height="765" viewBox="0 0 1351 765">
<clipPath id="pc"><rect x="600" y="100" width="14" height="320"/></clipPath>
<circle cx="610.500" cy="142.500" r="3" fill="#fff" stroke="#6868E8" clip-path="url(#pc)"/>
<path d="M611 162.5H716" stroke="#6868E8" fill="none"/>
<circle cx="610" cy="163.0" r="3" fill="#6868E8"/>
<path d="M714 159.0l5.500 3.500-5.500 3.500z" fill="#6868E8"/>
<path d="M611 183.5H716" stroke="#6868E8" fill="none"/>
<circle cx="610" cy="184.0" r="3" fill="#6868E8"/>
<path d="M714 180.0l5.500 3.500-5.500 3.500z" fill="#6868E8"/>
<path d="M611 204.5H716" stroke="#6868E8" fill="none"/>
<circle cx="610" cy="205.0" r="3" fill="#6868E8"/>
<path d="M714 201.0l5.500 3.500-5.500 3.500z" fill="#6868E8"/>
<path d="M611 225.5H716" stroke="#6868E8" fill="none"/>
<circle cx="610" cy="226.0" r="3" fill="#6868E8"/>
<path d="M714 222.0l5.500 3.500-5.500 3.500z" fill="#6868E8"/>
<circle cx="610.500" cy="247.0" r="3" fill="#fff" stroke="#6868E8" clip-path="url(#pc)"/>
<path d="M611 267.5H625.500L701 246.5H716" stroke="#6868E8" fill="none"/>
<circle cx="610" cy="268.0" r="3" fill="#6868E8"/>
<path d="M714 243.0l5.500 3.500-5.500 3.500z" fill="#6868E8"/>
<circle cx="610.500" cy="289.0" r="3" fill="#fff" stroke="#6868E8" clip-path="url(#pc)"/>
<circle cx="610.500" cy="310.0" r="3" fill="#fff" stroke="#6868E8" clip-path="url(#pc)"/>
<circle cx="610.500" cy="331.0" r="3" fill="#fff" stroke="#6868E8" clip-path="url(#pc)"/>
<circle cx="610.500" cy="352.0" r="3" fill="#fff" stroke="#6868E8" clip-path="url(#pc)"/>
<circle cx="610.500" cy="373.0" r="3" fill="#fff" stroke="#6868E8" clip-path="url(#pc)"/>
<path d="M715.500 138.500v7l4.500-3.500z" fill="#fff" stroke="#6868E8" stroke-width=".9"/>
</svg>
<div class="r" style="left:352px;top:60px;width:149px;height:22px;border:1px solid #D0EBA6;border-radius:3px;background:#EAEFF0"></div>
<svg style="left:0;top:0" width="520" height="90" viewBox="0 0 520 90">
<g stroke="#919191" fill="none">
<path d="M358.500 66.500h5.500l4 4v7.500h-9.500z M364 66.500v4h4"/>
<path d="M354.500 63.500l3 3M357.500 63.500l-1 1M354.500 66.500l1-1M356 62.500v1M353.500 65h1" stroke="#A0A0A0"/>
<circle cx="378.500" cy="70.500" r="2"/><circle cx="384.500" cy="76" r="2"/>
<path d="M380.500 70.500l9.500-2.500M385 74l2-10.500M383 71.500l3-3" stroke-width="1.200"/>
<path d="M397.500 63.500h6l2.500 2.500v8.500h-8.500z"/>
<path d="M402.500 67.500h5l3 3v7h-8z" fill="#EAEFF0"/><path d="M404 71.500h5M404 73.500h5M404 75.500h5"/>
<path d="M418.500 65.500h14M418.500 65.500v11h5M432.500 65.500v2M423 64.500h5"/>
<path d="M424.500 68.500h5l3 3v6h-8z" fill="#EAEFF0"/><path d="M426 72.500h5M426 74.500h5"/>
<path d="M439.500 66.500h14M441.500 67v9.500h10V67M443.500 64.500h6v2h-6z"/>
<path d="M445 74v-1.500M447 74v-3M449 74v-4.500" stroke-width="1.200"/>
<path d="M460.500 72.500v5h14v-5h-3.500M460.500 72.500h3.500"/>
<path d="M464 72v-3h-2.500l6-5.500 6 5.500H471v3"/>
<path d="M481.500 63.500h14v5h-3M481.500 63.500v5h3"/>
<path d="M485 68v4h-2.500l6 5.500 6-5.500H492v-4M486.500 74l2 2 2-2" />
</g></svg>
<div class="r" style="left:3px;top:443px;width:1345px;height:319px;border:1px solid #9C9C9C;border-radius:7px 7px 0 0;background:#fff"></div>
<div class="r" style="left:4px;top:444px;width:1343px;height:23px;background:#ECE9D8;border-radius:6px 6px 0 0"></div>
<div class="r" style="left:4px;top:466px;width:1343px;height:3px;background:#9DBDF8"></div>
<div class="r" style="left:4px;top:469px;width:2px;height:292px;background:#9DBDF8"></div>
<div class="r" style="left:1345px;top:469px;width:2px;height:292px;background:#9DBDF8"></div>
<div class="r" style="left:4px;top:759px;width:1343px;height:2px;background:#9DBDF8"></div>
<svg style="left:0;top:440px" width="700" height="30" viewBox="0 440 700 30">
<defs><linearGradient id="pg" x1="0" y1="0" x2="0" y2="1"><stop offset="0" stop-color="#EEF3FC"/><stop offset="1" stop-color="#98B6EB"/></linearGradient></defs>
<path d="M4 469 V449 Q4 443.500 9 443.500 H94 C105 443.500 110 452 115 457 C120 462 123 465.500 130 466 V469 Z" fill="url(#pg)"/>
<path d="M94 443.500 C105 443.500 110 452 115 457 C120 462 123 465.500 130 465.500 H229" fill="none" stroke="#9C9C9C"/>
<path d="M224 443.500 q6 0 6.500 6 V466 M385 443.500 q6 0 6.500 6 V466 M511 443.500 q6 0 6.500 6 V466 M606 443.500 q6 0 6.500 6 V466" fill="none" stroke="#9C9C9C"/>
</svg>
<svg style="left:9px;top:449px" width="13" height="11" viewBox="0 0 13 11"><rect x=".5" y=".5" width="12" height="10" fill="#fff" stroke="#5F6F8A"/>
<rect x="1" y="1" width="11" height="1.500" fill="#8A96AA"/>
<path d="M1 4.500h11M1 6.500h11M1 8.500h11" stroke="#B8B8B8"/><path d="M4.500 3v7.500" stroke="#B8B8B8"/></svg>
<span class="t" style="left:27.5px;top:447.5px;letter-spacing:-0.270px;">Properties</span>
<svg style="left:87.5px;top:449.5px" width="11" height="11" viewBox="0 0 11 11"><path d="M1 1h2.500l2 2.300 2-2.300H10v2L7.800 5.500 10 8v2H7.500l-2-2.300-2 2.300H1V8l2.200-2.500L1 3z" fill="#fff" stroke="#4A4A4A" stroke-width=".9"/></svg>
<svg style="left:123px;top:448px" width="16" height="14" viewBox="0 0 16 14"><g fill="none" stroke="#444" stroke-width="1">
<circle cx="3.500" cy="5.500" r="2.300"/><circle cx="10" cy="5.500" r="2.300"/>
<path d="M5.800 5q1-1 2 0M1.500 4l2-3.500M12 4.500l1.500-3.500 1.500.8"/></g>
<path d="M4.500 10.500l2.500 2.500M7 10.500l-2.500 2.500" stroke="#3B5FA8" stroke-width="1.100"/>
<path d="M9 11.500h4.500M9 13.500h4.500" stroke="#222" stroke-width="1"/></svg>
<span class="t" style="left:143px;top:447.5px;letter-spacing:-0.287px;">Data Viewer</span>
<svg style="left:234px;top:447px" width="16" height="16" viewBox="0 0 16 16"><path d="M6.500 5v8.500h4M6.500 8.500h4" stroke="#5A82C0" fill="none"/>
<rect x="4" y=".5" width="4.500" height="4.500" fill="#E8F6E0" stroke="#2E8A1E"/>
<rect x="11" y="6.500" width="4" height="4" fill="#FFE060" stroke="#B08000"/>
<rect x="11" y="11.500" width="4" height="4" fill="#E8F0FF" stroke="#4A70B8"/>
<path d="M.800 12.500l2.200 2.500 4-5" stroke="#3FAE2A" stroke-width="1.800" fill="none"/></svg>
<span class="t" style="left:254px;top:447.5px;letter-spacing:-0.145px;">Object Dependencies</span>
<svg style="left:396px;top:447px" width="16" height="16" viewBox="0 0 16 16"><path d="M2.500 .500h7l3 3v11h-10z" fill="#F4F8FF" stroke="#6A90D0"/>
<path d="M.500 3.500l2 2.500L6.500 .800" stroke="#2E9A1E" stroke-width="1.800" fill="none"/>
<path d="M4 8.500h3M4 11h2" stroke="#9AB4E0"/>
<circle cx="10.500" cy="10.500" r="4.500" fill="#58B83C" stroke="#2E8A1E"/><path d="M10.500 8v3h2.500" stroke="#fff" fill="none" stroke-width="1.200"/></svg>
<span class="t" style="left:416px;top:447.5px;letter-spacing:0.059px;">Validation Log</span>
<svg style="left:523px;top:451px" width="16" height="13" viewBox="0 0 16 13"><rect x=".5" y=".5" width="14" height="5.500" fill="#E8E8E8" stroke="#909090"/>
<rect x="1" y="1" width="8.500" height="4.500" fill="#58B03C"/>
<circle cx="11.500" cy="8.500" r="3.800" fill="#48A82C" stroke="#2E7A1E" stroke-width=".8"/><path d="M10.300 6.500v4l3-2z" fill="#fff"/></svg>
<span class="t" style="left:542px;top:447.5px;letter-spacing:-0.379px;">Progress</span>
<div class="r" style="left:6px;top:469px;width:113px;height:290px;background:linear-gradient(#A6BDD7,#668BAF)"></div>
<div class="r" style="left:11px;top:545px;width:108px;height:23px;background:#C3D3E6;border:1px solid #fff;border-right:none"></div>
<span class="t" style="left:19px;top:482px;letter-spacing:-0.529px;color:#EEF3F9;">General</span>
<span class="t" style="left:19px;top:504px;letter-spacing:-0.125px;color:#EEF3F9;">Data Object</span>
<span class="t" style="left:19px;top:526px;letter-spacing:-0.203px;color:#EEF3F9;">Ports</span>
<span class="t" style="left:19px;top:547.5px;letter-spacing:-0.138px;font-weight:bold;">Query</span>
<span class="t" style="left:19px;top:570px;letter-spacing:0.039px;color:#EEF3F9;">Run-time</span>
<span class="t" style="left:19px;top:592px;letter-spacing:-0.433px;color:#EEF3F9;">Sources</span>
<span class="t" style="left:19px;top:614px;letter-spacing:0.060px;color:#EEF3F9;">Run-time Linking</span>
<span class="t" style="left:19px;top:636px;letter-spacing:-0.047px;color:#EEF3F9;">Advanced</span>
<span class="t" style="left:124.5px;top:478.5px;letter-spacing:-0.472px;">Show:</span>
<div class="r" style="left:161px;top:480px;width:12px;height:12px;border:1px solid #6E7680;border-radius:50%;background:radial-gradient(circle,#2A7CC8 0 1.500px,#12528E 3px,#D4DDE6 3.800px,#F4F6F8 5.500px)"></div>
<span class="t" style="left:178px;top:478.5px;letter-spacing:-0.365px;">Simple</span>
<div class="r" style="left:176px;top:478px;width:38px;height:17px;border:1px dotted #000"></div>
<div class="r" style="left:223px;top:480px;width:12px;height:12px;border:1px solid #7E8690;border-radius:50%;background:radial-gradient(circle,#DCE0E4 0 2px,#F6F7F8 5.500px)"></div>
<span class="t" style="left:239.5px;top:478.5px;letter-spacing:-0.172px;">Advanced</span>
<div class="r" style="left:1243px;top:475px;width:96px;height:23px;border:1px solid #ADB2B5;border-radius:3px;background:#F4F4F4"></div>
<span class="t" style="left:1248px;top:479px;letter-spacing:-0.124px;color:#8E8E8E;">Validate Query...</span>
<div class="r" style="left:120px;top:470px;width:1220px;height:288px;overflow:hidden">
<div class="r" style="left:4px;top:41px;width:1300px;height:126px;border:1px solid #D0DDE8;border-radius:4px"></div>
<div class="r" style="left:11px;top:35px;width:75px;height:14px;background:#fff"></div>
<div class="r" style="left:46px;top:77px;width:1300px;height:21px;border:1px solid #E0E3E8;border-top-color:#ABADB3;border-radius:2px;background:#fff"></div>
<div class="r" style="left:46px;top:107px;width:1300px;height:21px;border:1px solid #E0E3E8;border-top-color:#ABADB3;border-radius:2px;background:#fff"></div>
<div class="r" style="left:46px;top:137px;width:1300px;height:21px;border:1px solid #E0E3E8;border-top-color:#ABADB3;border-radius:2px;background:#fff"></div>
<span class="t" style="left:51.8px;top:110px;letter-spacing:-0.112px">dih__publication_instance_id</span>
<span class="t" style="left:206.7px;top:110px;letter-spacing:-0.022px">in</span>
<span class="t" style="left:219.7px;top:110px;letter-spacing:-0.198px">($employee__PublicationInstanceIDs)</span>
<span class="t" style="left:419.1px;top:110px;letter-spacing:-0.477px">and</span>
<span class="t" style="left:441.6px;top:110px;letter-spacing:-0.188px">dih__publication_instance_date</span>
<span class="t" style="left:608.0px;top:110px;letter-spacing:-0.222px">in</span>
<span class="t" style="left:621.3px;top:110px;letter-spacing:-0.213px">($employee__PublicationInstanceDates)</span>
<span class="t" style="left:833.3px;top:110px;letter-spacing:-0.444px">and</span>
<span class="t" style="left:856.4px;top:110px;letter-spacing:-0.195px">publication_date_partition</span>
<span class="t" style="left:992.6px;top:110px;letter-spacing:0.027px">in($employee__PublicationInstancePartition)</span>
</div>
<span class="t" style="left:133.5px;top:504px;letter-spacing:-0.225px;">Define Query</span>
<div class="r" style="left:166px;top:525px;width:13px;height:13px;border:1px solid #8E8F8F;background:#F4F4F4"></div>
<div class="r" style="left:168px;top:527px;width:9px;height:9px;border:1px solid #C4C8CC;background:linear-gradient(135deg,#D0D4D8,#fff)"></div>
<span class="t" style="left:182.5px;top:524px;letter-spacing:-0.103px;">Select distinct</span>
<span class="t" style="left:132.3px;top:550px;letter-spacing:-0.372px;">Join:</span>
<span class="t" style="left:132px;top:580px;letter-spacing:-0.143px;">Filter:</span>
<span class="t" style="left:132px;top:610px;letter-spacing:-0.269px;">Sort:</span>
<span class="t" style="left:172px;top:550px;letter-spacing:-0.054px;">(Unspecified)</span>
<span class="t" style="left:172px;top:610px;letter-spacing:-0.054px;">(Unspecified)</span>
<div class="r" style="left:125px;top:738px;width:1215px;height:16px;background:#EDEDED"></div>
<div class="r" style="left:142px;top:738px;width:1089px;height:15px;border:1px solid #949494;border-radius:2px;background:linear-gradient(#F6F6F6,#EAEAEA 48%,#D2D2D2 52%,#D8D8D8)"></div>
<div class="r" style="left:683px;top:742px;width:1px;height:7px;background:#444"></div>
<div class="r" style="left:685px;top:742px;width:1px;height:7px;background:#444"></div>
<div class="r" style="left:687px;top:742px;width:1px;height:7px;background:#444"></div>
<svg style="left:0;top:0" width="1351" height="765"><path d="M133.5 742.0v7l-4.500-3.500z M1330.5 742.0v7l4.500-3.500z" fill="#222"/></svg>
<svg style="left:1253px;top:448px" width="15" height="14" viewBox="0 0 15 14"><rect x=".5" y="4.500" width="11" height="8.500" fill="#EAF4FF" stroke="#C8B890"/>
<rect x="0" y="4" width="9" height="2.500" fill="#2F6ED0"/>
<path d="M6.500 8.500l3.500-3.500" stroke="#1A3A70" stroke-width="1.200"/>
<path d="M8.500 3.500l3-3 2.500 2.500-3 3z" fill="#2EA82A" stroke="#1E7A1A" stroke-width=".8"/></svg>
<svg style="left:1284px;top:448px" width="10" height="6" viewBox="0 0 10 6"><path d="M.500 .500h9L5 5.500z" fill="#fff" stroke="#555" stroke-width=".9"/></svg>
<div class="r" style="left:1304px;top:449px;width:10px;height:4px;border:1px solid #555;background:#fff"></div>
<div class="r" style="left:1327px;top:449px;width:10px;height:10px;border:1px solid #555;background:linear-gradient(#fff 0 1px,#555 1px 2px,#fff 2px)"></div>
</body></html>
